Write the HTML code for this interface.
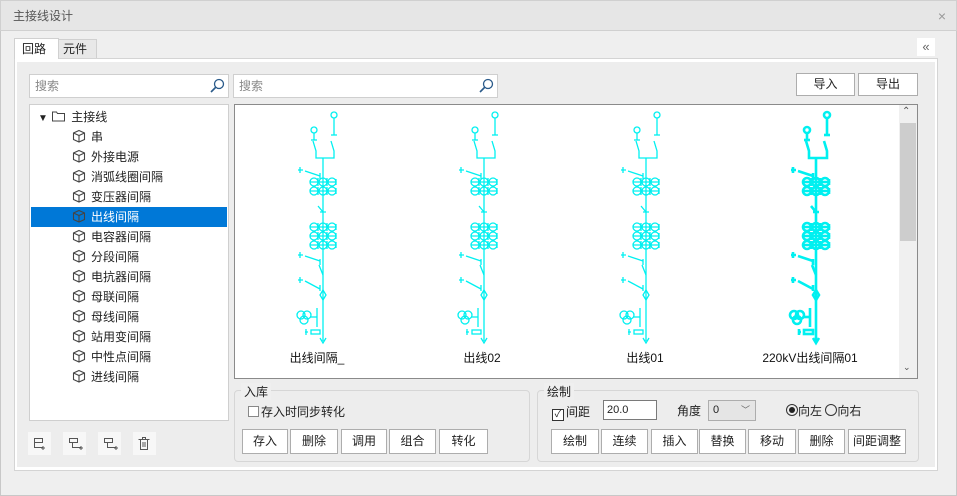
<!DOCTYPE html>
<html><head><meta charset="utf-8"><style>
*{box-sizing:border-box;margin:0;padding:0}
body{width:957px;height:496px;background:#efefef;font-family:"Liberation Sans","Noto Sans CJK SC",sans-serif;font-size:12px;color:#222;position:relative;overflow:hidden}
.a{position:absolute}
.title{left:0;top:0;width:957px;height:31px;background:#e6e6e6;border:1px solid #d0d0d0;color:#555;font-size:12px;line-height:31px;padding-left:12px}
.win{left:0;top:31px;width:957px;height:465px;border:1px solid #c8c8c8;border-top:none;background:#efefef}
.box{background:#fff;border:1px solid #cfcfcf}
.btn{position:absolute;background:#fff;border:1px solid #adadad;text-align:center;font-size:12px;color:#222}
.grp{position:absolute;border:1px solid #d6d6d6;border-radius:4px}
.gl{position:absolute;top:-8px;left:6px;background:#efefef;padding:0 3px;font-size:12px}
.tree div{height:20px;line-height:20px;position:relative}
.cube{display:inline-block;width:14px;height:14px;vertical-align:-2px;margin-right:5px}
</style></head><body>
<div class="a title">主接线设计<span style="position:absolute;right:10px;color:#999;font-size:14px">×</span></div>
<div class="a win"></div>
<div class="a" style="left:14px;top:38px;width:45px;height:21px;background:#fff;border:1px solid #d0d0d0;border-bottom:none;line-height:20px;padding-left:7px;font-size:12px;z-index:2">回路</div>
<div class="a" style="left:58px;top:39px;width:39px;height:20px;background:#e8e8e8;border:1px solid #d0d0d0;line-height:19px;padding-left:4px;font-size:12px">元件</div>
<div class="a" style="left:917px;top:38px;width:18px;height:18px;background:#fff;color:#666;font-size:13px;line-height:17px;text-align:center">«</div>
<div class="a" style="left:14px;top:58px;width:924px;height:413px;background:#fff;border:1px solid #d4d4d4"></div>
<div class="a" style="left:17px;top:62px;width:918px;height:405px;background:#ededed"></div>
<div class="a box" style="left:29px;top:74px;width:200px;height:24px;color:#888;line-height:22px;padding-left:5px">搜索
<svg class="a" style="right:3px;top:3px" width="16" height="16"><circle cx="10" cy="6" r="4.5" fill="none" stroke="#2a5a8a" stroke-width="1.3"/><line x1="7" y1="9" x2="2" y2="14" stroke="#2a5a8a" stroke-width="1.6"/></svg></div>
<div class="a box" style="left:233px;top:74px;width:265px;height:24px;color:#888;line-height:22px;padding-left:5px">搜索
<svg class="a" style="right:3px;top:3px" width="16" height="16"><circle cx="10" cy="6" r="4.5" fill="none" stroke="#2a5a8a" stroke-width="1.3"/><line x1="7" y1="9" x2="2" y2="14" stroke="#2a5a8a" stroke-width="1.6"/></svg></div>
<div class="btn" style="left:796px;top:73px;width:59px;height:23px;line-height:21px">导入</div>
<div class="btn" style="left:858px;top:73px;width:60px;height:23px;line-height:21px">导出</div>
<div class="a box tree" style="left:29px;top:104px;width:200px;height:317px;padding-top:2px;font-size:12px">
<div style="padding-left:8px"><span style="font-size:10px">▼</span> <svg class="cube" viewBox="0 0 14 14" style="width:15px"><path d="M1 3h4l1 1.5h7V12H1z" fill="none" stroke="#444"/></svg>主接线</div>
<script>
var it=["串","外接电源","消弧线圈间隔","变压器间隔","出线间隔","电容器间隔","分段间隔","电抗器间隔","母联间隔","母线间隔","站用变间隔","中性点间隔","进线间隔"];
var cube='<svg class="cube" viewBox="0 0 14 14"><path d="M7 1.5L12.5 4v6.5L7 13 1.5 10.5V4z M1.5 4L7 6.5 12.5 4 M7 6.5V13" fill="none" stroke="#444" stroke-width="1.1"/></svg>';
for(var i=0;i<it.length;i++){document.write('<div style="padding-left:42px;'+(i==4?'background:#0078d7;color:#fff;margin:0 1px;padding-left:41px':'')+'">'+cube+it[i]+'</div>');}
</script>
</div>
<svg class="a" style="left:28px;top:432px" width="130" height="24">
<g fill="#f7f7f7"><rect x="0" width="23" height="23"/><rect x="35" width="23" height="23"/><rect x="70" width="23" height="23"/><rect x="105" width="23" height="23"/></g>
<g fill="none" stroke="#555" stroke-width="1">
<path d="M6.5 6.5h8v4h-8zM6.5 10.5v5h8M15 14v4M13 16h4"/>
<path d="M41.5 6.5h8v4h-8zM44.5 10.5v5h8M53 14v4M51 16h4"/>
<path d="M76.5 6.5h8v4h-8zM79.5 10.5v5h8M88 14v4M86 16h4"/>
<path d="M110.5 7.5h11M114.5 7.5v-2h3v2M112.5 7.5v10h7v-10M115 10v5M117 10v5"/>
</g></svg>
<div class="a" style="left:234px;top:104px;width:684px;height:275px;background:#fff;border:1px solid #8a8a8a"></div>
<div class="a" style="left:899px;top:105px;width:18px;height:273px;background:#f0f0f0"></div>
<div class="a" style="left:900px;top:123px;width:16px;height:118px;background:#cdcdcd"></div>
<div class="a" style="left:902px;top:106px;font-size:10px;color:#555">⌃</div>
<div class="a" style="left:903px;top:362px;font-size:9px;color:#555">⌄</div>
<svg class="a" style="left:235px;top:105px" width="664" height="273">
<defs>
<g id="r"><circle cx="-9" cy="0" r="4"/><circle cx="0" cy="0" r="4"/><circle cx="9" cy="0" r="4"/><path d="M-13 0h26M-5-4v8M4-4v8M13-3v6"/></g>
<g id="d" fill="none" stroke="#00f0f0">
<circle cx="11" cy="10" r="3"/><line x1="11" y1="13" x2="11" y2="30"/><line x1="8" y1="30" x2="14" y2="30"/>
<circle cx="-9" cy="25" r="3"/><line x1="-9" y1="28" x2="-9" y2="35"/><line x1="-12" y1="35" x2="-6" y2="35"/>
<path d="M-10 36l3 10v7h18v-7l-3-10"/>
<line x1="0" y1="53" x2="0" y2="236"/>
<path d="M-20 65h-5M-23 62v6M-18 66l15 5M-3 68v6"/>
<use href="#r" y="77"/><use href="#r" y="86"/>
<path d="M-5 101l5 6M-3 107h6"/>
<use href="#r" y="122"/><use href="#r" y="131"/><use href="#r" y="140"/>
<path d="M-20 150h-5M-23 147v6M-18 151l15 5M-3 154v6"/>
<path d="M-4 160l4 10"/>
<path d="M-20 175h-5M-23 172v6M-18 176l15 8M-3 180v6"/>
<path d="M0 185l-3 5 3 5 3-5z"/>
<line x1="-6" y1="203" x2="-6" y2="222"/><circle cx="-22" cy="210" r="4"/><circle cx="-16" cy="210" r="4"/><circle cx="-19" cy="215" r="4"/><line x1="-13" y1="212" x2="-6" y2="212"/>
<rect x="-12" y="225" width="9" height="4"/><path d="M-15 227h-3M-17 224v6"/>
<path d="M-3 233l3 5 3-5"/>
</g></defs>
<use href="#d" x="88" y="0" stroke-width="1.3"/>
<use href="#d" x="249" y="0" stroke-width="1.3"/>
<use href="#d" x="411" y="0" stroke-width="1.3"/>
<use href="#d" x="581" y="0" stroke-width="2.6"/>
<g font-family="Liberation Sans,Noto Sans CJK SC,sans-serif" font-size="12" fill="#111" text-anchor="middle">
<text x="82" y="257">出线间隔_</text><text x="247" y="257">出线02</text><text x="410" y="257">出线01</text><text x="575" y="257">220kV出线间隔01</text></g>
</svg>
<div class="grp" style="left:234px;top:390px;width:296px;height:72px"><span class="gl">入库</span></div>
<div class="a" style="left:248px;top:403px;font-size:12px"><span style="display:inline-block;width:11px;height:11px;border:1px solid #888;background:#fff;vertical-align:-1px;margin-right:2px"></span>存入时同步转化</div>
<div class="btn" style="left:242px;top:429px;width:46px;height:25px;line-height:23px">存入</div>
<div class="btn" style="left:290px;top:429px;width:48px;height:25px;line-height:23px">删除</div>
<div class="btn" style="left:341px;top:429px;width:46px;height:25px;line-height:23px">调用</div>
<div class="btn" style="left:389px;top:429px;width:47px;height:25px;line-height:23px">组合</div>
<div class="btn" style="left:439px;top:429px;width:49px;height:25px;line-height:23px">转化</div>
<div class="grp" style="left:537px;top:390px;width:382px;height:72px"><span class="gl">绘制</span></div>
<div class="a" style="left:552px;top:403px;font-size:12px"><span style="display:inline-block;width:12px;height:12px;border:1px solid #333;background:#fff;vertical-align:-1px;font-size:10px;line-height:10px;text-align:center;margin-right:2px">✓</span>间距</div>
<div class="a" style="left:603px;top:400px;width:54px;height:20px;background:#fff;border:1px solid #7a7a7a;padding-left:3px;line-height:18px;font-size:11px">20.0</div>
<div class="a" style="left:677px;top:402px;font-size:12px">角度</div>
<div class="a" style="left:708px;top:400px;width:48px;height:21px;background:#e5e5e5;border:1px solid #adadad;padding-left:4px;line-height:19px;font-size:11px">0<span style="position:absolute;right:5px;color:#666;font-size:9px">﹀</span></div>
<div class="a" style="left:786px;top:402px;font-size:12px"><span style="display:inline-block;width:12px;height:12px;border:1px solid #333;border-radius:50%;vertical-align:-1px;position:relative"><span style="position:absolute;left:2px;top:2px;width:6px;height:6px;border-radius:50%;background:#222"></span></span>向左 <span style="display:inline-block;width:12px;height:12px;border:1px solid #333;border-radius:50%;vertical-align:-1px"></span>向右</div>
<div class="btn" style="left:551px;top:429px;width:48px;height:25px;line-height:23px">绘制</div>
<div class="btn" style="left:601px;top:429px;width:47px;height:25px;line-height:23px">连续</div>
<div class="btn" style="left:651px;top:429px;width:47px;height:25px;line-height:23px">插入</div>
<div class="btn" style="left:699px;top:429px;width:47px;height:25px;line-height:23px">替换</div>
<div class="btn" style="left:748px;top:429px;width:48px;height:25px;line-height:23px">移动</div>
<div class="btn" style="left:798px;top:429px;width:47px;height:25px;line-height:23px">删除</div>
<div class="btn" style="left:848px;top:429px;width:58px;height:25px;line-height:23px">间距调整</div>
</body></html>
